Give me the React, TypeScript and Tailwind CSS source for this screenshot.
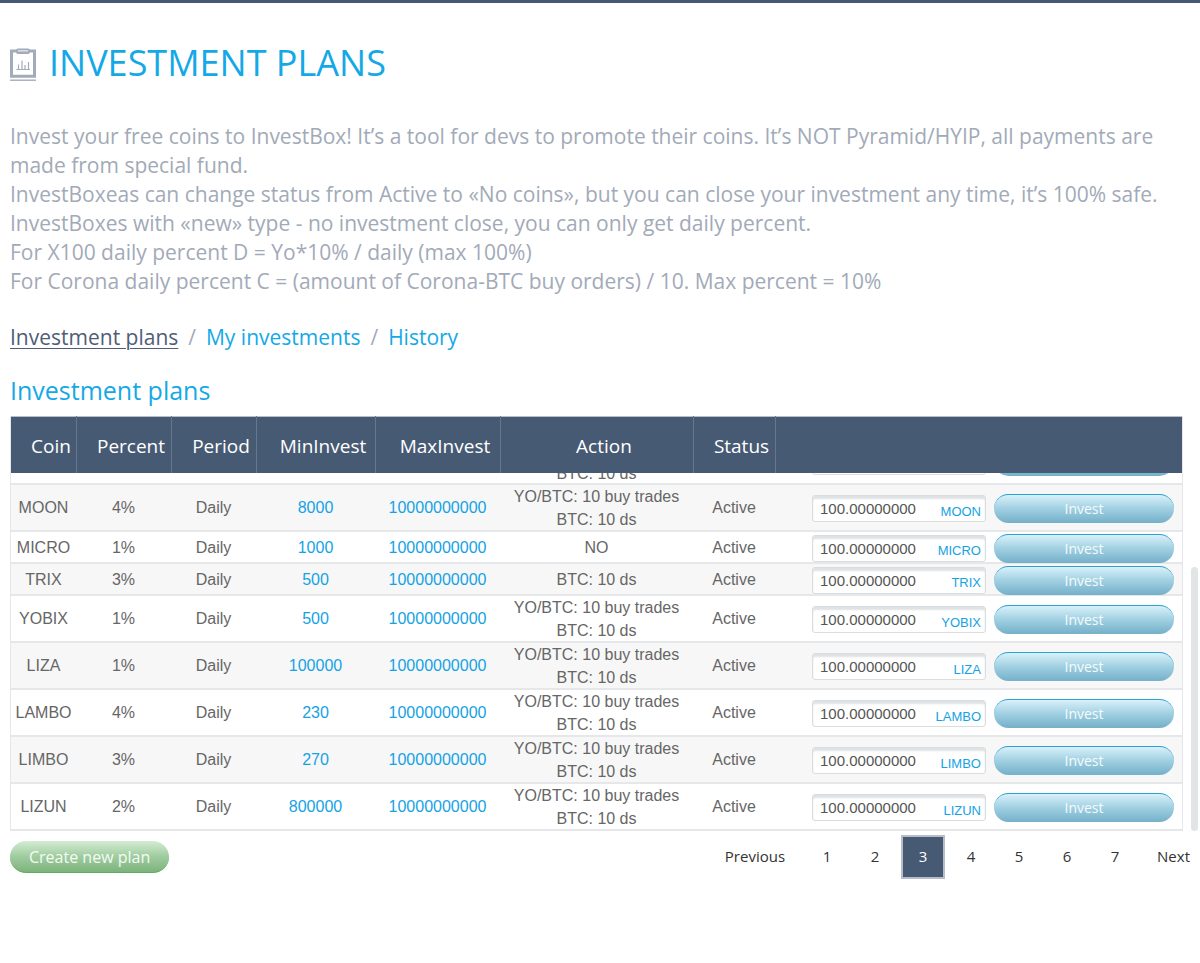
import { useState } from 'react';

type Plan = {
  coin: string;
  percent: string;
  min: string;
  action: string[];
};

const TRADES = ['YO/BTC: 10 buy trades', 'BTC: 10 ds'];

const PLANS: Plan[] = [
  { coin: 'MOON', percent: '4%', min: '8000', action: TRADES },
  { coin: 'MICRO', percent: '1%', min: '1000', action: ['NO'] },
  { coin: 'TRIX', percent: '3%', min: '500', action: ['BTC: 10 ds'] },
  { coin: 'YOBIX', percent: '1%', min: '500', action: TRADES },
  { coin: 'LIZA', percent: '1%', min: '100000', action: TRADES },
  { coin: 'LAMBO', percent: '4%', min: '230', action: TRADES },
  { coin: 'LIMBO', percent: '3%', min: '270', action: TRADES },
  { coin: 'LIZUN', percent: '2%', min: '800000', action: TRADES },
];

const HEADERS = ['Coin', 'Percent', 'Period', 'MinInvest', 'MaxInvest', 'Action', 'Status'];
const PAGES = [1, 2, 3, 4, 5, 6, 7];

function ClipboardChart() {
  return (
    <svg viewBox="0 0 27 34" className="mt-1 h-[34px] w-[27px] shrink-0" aria-hidden="true">
      <path d="M1.5 3H24.5V28.2H1.5Z" fill="none" stroke="#a2abb9" strokeWidth="3" />
      <rect x="6" y="0.5" width="14" height="5.5" rx="2" fill="#a2abb9" />
      <rect x="8" y="2" width="10" height="1.6" fill="#d9dde4" />
      <path d="M0 32.2H26" stroke="#a2abb9" strokeWidth="1.4" />
      <path d="M6.5 21.5H20M8.5 21V16.5M12 21V12.5M15 21V17M18.5 21V14" fill="none" stroke="#a2abb9" strokeWidth="1.2" />
    </svg>
  );
}

function Columns() {
  return (
    <colgroup>
      <col className="w-[65px]" />
      <col className="w-[95px]" />
      <col className="w-[85px]" />
      <col className="w-[119px]" />
      <col className="w-[125px]" />
      <col className="w-[193px]" />
      <col className="w-[82px]" />
      <col />
    </colgroup>
  );
}

const FIELD = 'flex h-[27px] w-[174px] items-center rounded-[3px] border border-[#d9dddf] bg-white pr-1 pl-[7px] shadow-[inset_0_3px_2px_#dfe2e4]';
const INVEST =
  "h-[29px] flex-1 rounded-full border-t border-[#2ba3d0] bg-linear-to-b from-[#d9f1fa] via-[#9fcfe1] to-[#74b0c9] font-['Open_Sans',sans-serif] text-[14px] leading-7 text-white/90";

function InvestForm({ coin }: { coin: string }) {
  const [amount, setAmount] = useState('100.00000000');
  return (
    <div className="flex items-center gap-2 pt-px pr-2 pl-[37px]">
      <label className={FIELD}>
        <input
          value={amount}
          onChange={(e) => setAmount(e.target.value)}
          className="w-0 flex-1 bg-transparent pt-0.5 text-[15px] text-[#555] outline-none"
        />
        <span className="pt-1.5 text-[13px] text-[#14a3e4]">{coin}</span>
      </label>
      <button type="button" className={INVEST}>
        Invest
      </button>
    </div>
  );
}

function PlanRow({ plan }: { plan: Plan }) {
  return (
    <tr
      className={`shadow-[inset_0_-2px_#e6e7e8] odd:bg-white even:bg-[#f7f7f7] ${plan.action.length > 1 ? 'h-[47px]' : 'h-8'}`}
    >
      <td>{plan.coin}</td>
      <td>{plan.percent}</td>
      <td>Daily</td>
      <td className="text-[#14a3e4]">{plan.min}</td>
      <td className="text-[#14a3e4]">10000000000</td>
      <td className="leading-[23px]">
        {plan.action.map((line) => (
          <div key={line}>{line}</div>
        ))}
      </td>
      <td>Active</td>
      <td>
        <InvestForm coin={plan.coin} />
      </td>
    </tr>
  );
}

function ScrolledRow() {
  return (
    <tr className="h-[47px] bg-white shadow-[inset_0_-2px_#e6e7e8]">
      <td colSpan={5} />
      <td className="align-bottom leading-[23px]">BTC: 10 ds</td>
      <td />
      <td>
        <div className="flex items-center gap-2 pt-px pr-2 pl-[37px]">
          <div className={FIELD} />
          <div className={INVEST} />
        </div>
      </td>
    </tr>
  );
}

export default function App() {
  const [page, setPage] = useState(3);
  return (
    <main className="border-t-3 border-[#485a73] bg-white font-['Open_Sans',sans-serif]">
      <div className="pr-1 pl-[10px]">
        <h1 className="flex items-center gap-3 pt-9 text-[36px] leading-[48px] text-[#14a9e6]">
          <ClipboardChart />
          INVESTMENT PLANS
        </h1>
        <p className="pt-[35px] text-[21px] leading-[29px] text-[#a2aab8]">
          Invest your free coins to InvestBox! It’s a tool for devs to promote their coins. It’s NOT Pyramid/HYIP, all payments are made from special fund.
          <br />
          InvestBoxeas can change status from Active to «No coins», but you can close your investment any time, it’s 100% safe.
          <br />
          InvestBoxes with «new» type - no investment close, you can only get daily percent.
          <br />
          For X100 daily percent D = Yo*10% / daily (max 100%)
          <br />
          For Corona daily percent C = (amount of Corona-BTC buy orders) / 10. Max percent = 10%
        </p>
        <nav className="flex gap-[10px] pt-[27px] text-[21px] leading-[29px] text-[#a2aab8]">
          <a href="#plans" className="text-[#4f5d75] underline decoration-1 underline-offset-3">Investment plans</a>
          <span>/</span>
          <a href="#mine" className="text-[#14a9e6]">My investments</a>
          <span>/</span>
          <a href="#history" className="text-[#14a9e6]">History</a>
        </nav>
        <h2 className="pt-5 pb-2 text-[25px] leading-9 text-[#14a9e6]">Investment plans</h2>
      </div>

      <div className="flex gap-2 pr-[2px] pl-[10px]">
        <div className="flex-1 border-x border-[#e6e7e8]">
          <table className="w-full table-fixed border-collapse border-t border-[#b9bfc8] bg-[#475a74] text-white">
            <Columns />
            <thead>
              <tr className="h-14">
                {HEADERS.map((h) => (
                  <th key={h} scope="col" className="border-r border-[#66768d] pt-[2px] pr-[5px] pl-5 text-center text-[19px] font-normal">
                    {h}
                  </th>
                ))}
                <td />
              </tr>
            </thead>
          </table>
          <div className="flex h-[358px] flex-col justify-end overflow-hidden">
            <table className="w-full shrink-0 table-fixed border-collapse text-center font-['Liberation_Sans',sans-serif] text-[16px] text-[#666]">
              <Columns />
              <tbody>
                <ScrolledRow />
                {PLANS.map((p) => (
                  <PlanRow key={p.coin} plan={p} />
                ))}
              </tbody>
            </table>
          </div>
        </div>
        <div className="flex w-[7px] flex-col justify-end">
          <div className="h-[264px] rounded-full bg-[#e1e5e6]" />
        </div>
      </div>

      <div className="flex items-center justify-between px-[10px] pt-1">
        <button
          type="button"
          className="h-8 rounded-full border-b border-[#5fae5f] bg-linear-to-b from-[#d3ecd3] via-[#9fcc9f] to-[#7db37d] px-[19px] text-[16px] leading-8 text-white/90"
        >
          Create new plan
        </button>
        <nav aria-label="Pages" className="flex items-center gap-1 text-[15px] text-[#333]">
          <button type="button" className="pr-4">Previous</button>
          {PAGES.map((n) => (
            <button
              key={n}
              type="button"
              onClick={() => setPage(n)}
              className={n === page ? 'h-11 w-11 border-2 border-[#b4bdc8] bg-[#475a74] text-white' : 'h-11 w-11'}
            >
              {n}
            </button>
          ))}
          <button type="button" className="pl-4">Next</button>
        </nav>
      </div>
    </main>
  );
}
